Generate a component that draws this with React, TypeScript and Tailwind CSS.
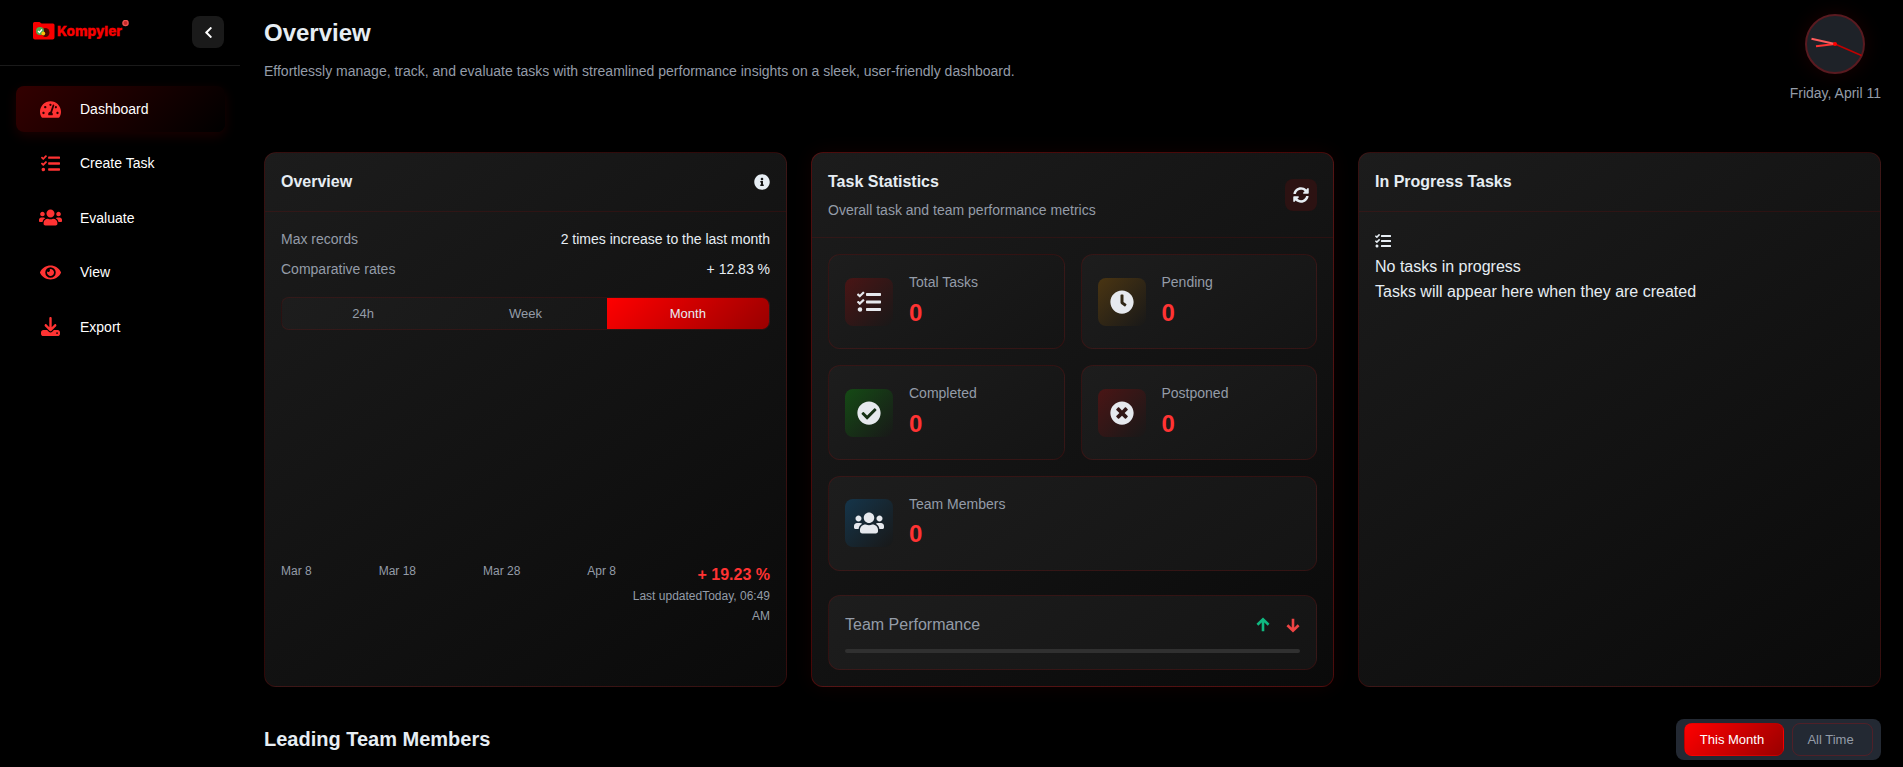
import { FaTachometerAlt, FaTasks, FaUsers, FaEye, FaClock, FaCheckCircle, FaTimesCircle, FaInfoCircle, FaSyncAlt, FaChevronLeft } from 'react-icons/fa';
import { FaDownload } from 'react-icons/fa6';
import type { ReactNode } from 'react';

const nav = [
  { label: 'Dashboard', icon: <FaTachometerAlt size={21} />, active: true },
  { label: 'Create Task', icon: <FaTasks size={19} /> },
  { label: 'Evaluate', icon: <FaUsers size={23} /> },
  { label: 'View', icon: <FaEye size={21} /> },
  { label: 'Export', icon: <FaDownload size={19} /> },
];

function Arrow({ down, className }: { down?: boolean; className: string }) {
  return (
    <svg width="14" height="16" viewBox="0 0 14 16" className={className}>
      <path d={down ? 'M7 1.800V13.500M1.400 8.200L7 13.700L12.600 8.200' : 'M7 14.200V2.500M1.400 7.800L7 2.300L12.600 7.800'} fill="none" stroke="currentColor" strokeWidth="2.600" />
    </svg>
  );
}

function Logo() {
  return (
    <svg width="98" height="24" viewBox="0 1 98 24" className="ml-8">
      <path d="M1 4.500q0-1.500 1.500-1.500h5l2 1.500h11.500q1.500 0 1.500 1.500v12.500q0 2-2 2H3q-2 0-2-2z" fill="#f80000" />
      <ellipse cx="13.500" cy="13.500" rx="4" ry="4.500" fill="#4a0800" />
      <circle cx="8" cy="12" r="4" fill="#4caf50" />
      <path d="M6 12l1.500 1.500 2.500-3" stroke="#fff" strokeWidth="1.200" fill="none" />
      <circle cx="11.300" cy="14.500" r="1.900" fill="#ffc107" />
      <text x="25" y="17" fontFamily="Inter, sans-serif" fontWeight="800" fontSize="13.500" fill="#f80000" stroke="#f80000" strokeWidth="0.300" textLength="65" lengthAdjust="spacingAndGlyphs">Kompyler</text>
      <circle cx="93.500" cy="4" r="2.600" fill="#c62828" stroke="#ef5350" strokeWidth="1.400" />
    </svg>
  );
}

function Stat({ label, icon, tint, wide }: { label: string; icon: ReactNode; tint: string; wide?: boolean }) {
  return (
    <div className={`flex items-center gap-4 rounded-xl border border-[#ff000020] bg-linear-145/srgb from-[#1d1d1d] to-[#141414] p-4 ${wide ? 'col-span-2' : ''}`}>
      <div className={`flex size-12 items-center justify-center rounded-lg bg-linear-135/srgb text-[#e6e9ee] ${tint}`}>{icon}</div>
      <div>
        <div className="text-sm leading-[22.4px] text-[#949ca8]">{label}</div>
        <div className="text-2xl leading-[38.4px] font-bold text-[#ff3333]">0</div>
      </div>
    </div>
  );
}

const card = 'flex w-[523px] flex-col rounded-xl border bg-linear-145/srgb from-[#1c1c1c] to-[#0a0a0a]';

export default function App() {
  return (
    <div className="flex h-[767px] w-[1903px] overflow-hidden bg-black font-['Liberation_Sans',Arial,sans-serif] text-base leading-[25.6px] text-[#e6edf3]">
      <aside className="w-60 shrink-0">
        <div className="flex h-[66px] items-center justify-between border-b border-[#1a1a1a] pr-4 pb-px">
          <Logo />
          <button className="flex size-8 items-center justify-center rounded-lg bg-[#1a1a1a] text-white"><FaChevronLeft size={13} /></button>
        </div>
        <nav className="flex flex-col gap-2 px-4 pt-5">
          {nav.map((n) => (
            <div key={n.label} className={`flex h-[46.4px] w-[209px] items-center rounded-lg pl-[23px] ${n.active ? 'bg-linear-135/srgb from-[#330000] to-black shadow-[0_4px_12px_rgba(255,0,0,0.1)]' : ''}`}>
              <span className="flex w-[23px] justify-center text-[#ff3333]">{n.icon}</span>
              <span className="ml-[18px] text-sm leading-[22.4px] text-white">{n.label}</span>
            </div>
          ))}
        </nav>
      </aside>

      <main className="w-[1663px] pr-[22px] pl-6">
        <header className="flex h-[152.400px] justify-between">
          <div className="pt-[14px]">
            <h1 className="text-2xl leading-[38.4px] font-bold">Overview</h1>
            <p className="mt-2 text-sm leading-[22.4px] text-[#949ca8]">Effortlessly manage, track, and evaluate tasks with streamlined performance insights on a sleek, user-friendly dashboard.</p>
          </div>
          <div className="flex flex-col items-end pt-[14px]">
            <div className="mr-4 size-[60px] rounded-full shadow-[0_0_20px_rgba(255,0,0,0.1)]">
              <svg width="60" height="60" viewBox="0 0 60 60">
                <circle cx="30" cy="30" r="29" fill="#1e2228" stroke="#5a1a20" strokeWidth="2" />
                <path d="M30 30L11 32.200" stroke="#ff3333" strokeWidth="2" />
                <path d="M30 30L6.500 24.700" stroke="#ff5c5c" strokeWidth="2" />
                <path d="M30 30L56.500 41.500" stroke="#c00000" strokeWidth="1.500" />
                <circle cx="30" cy="30" r="2" fill="#ff0000" />
              </svg>
            </div>
            <div className="mt-2 text-sm leading-[22.4px] text-[#949ca8]">Friday, April 11</div>
          </div>
        </header>

        <div className="flex h-[534.600px] gap-6">
          <section className={`${card} border-[#ff000026]`}>
            <div className="flex items-center justify-between border-b border-[#ff00001a] p-4">
              <h2 className="font-bold">Overview</h2>
              <FaInfoCircle size={16} />
            </div>
            <div className="p-4">
              <div className="flex justify-between text-sm leading-[22.4px]"><span className="text-[#949ca8]">Max records</span><span>2 times increase to the last month</span></div>
              <div className="mt-2 flex justify-between text-sm leading-[22.4px]"><span className="text-[#949ca8]">Comparative rates</span><span>+ 12.83 %</span></div>
              <div className="mt-4 grid grid-cols-3 overflow-hidden rounded-lg border border-[#ff00001a] bg-linear-135/srgb from-[#1d1d1d] to-[#141414] text-center text-[13px] leading-[15px] text-[#949ca8]">
                <span className="py-2">24h</span>
                <span className="py-2">Week</span>
                <span className="bg-linear-135/srgb from-[#ff0000] to-[#990000] py-2 text-[#e6edf3]">Month</span>
              </div>
              <div className="mt-4 h-[200px]" />
              <div className="mt-4 flex gap-4 text-xs leading-[19.2px] text-[#949ca8]">
                <div className="flex grow justify-between"><span>Mar 8</span><span>Mar 18</span><span>Mar 28</span><span>Apr 8</span></div>
                <div className="w-[138px] text-right">
                  <div className="text-base leading-[25.6px] font-bold text-[#ff3333]">+ 19.23 %</div>
                  <div>Last updatedToday, 06:49 AM</div>
                </div>
              </div>
            </div>
          </section>

          <section className={`${card} border-[#ff000040] shadow-[0_0_20px_rgba(255,0,0,0.06)]`}>
            <div className="flex items-center justify-between border-b border-[#ff00001a] p-4">
              <div>
                <h2 className="font-bold">Task Statistics</h2>
                <p className="mt-1 text-sm leading-[22.4px] text-[#949ca8]">Overall task and team performance metrics</p>
              </div>
              <button className="flex size-8 items-center justify-center rounded-lg bg-[#2c1212]"><FaSyncAlt size={16} /></button>
            </div>
            <div className="p-4">
              <div className="grid grid-cols-2 gap-4">
                <Stat label="Total Tasks" tint="from-[#4a1515] to-[#181818]" icon={<FaTasks size={24} />} />
                <Stat label="Pending" tint="from-[#4a3512] to-[#181818]" icon={<FaClock size={24} />} />
                <Stat label="Completed" tint="from-[#154a15] to-[#181818]" icon={<FaCheckCircle size={24} />} />
                <Stat label="Postponed" tint="from-[#4a1515] to-[#181818]" icon={<FaTimesCircle size={24} />} />
                <Stat wide label="Team Members" tint="from-[#15354a] to-[#181818]" icon={<FaUsers size={30} />} />
              </div>
              <div className="mt-6 rounded-xl border border-[#ff000020] bg-linear-145/srgb from-[#1d1d1d] to-[#141414] p-4">
                <div className="flex items-center justify-between text-[#949ca8]">
                  <span>Team Performance</span>
                  <span className="flex gap-4"><Arrow className="text-[#10b981]" /><Arrow down className="text-[#ef4444]" /></span>
                </div>
                <div className="mt-3 h-1 rounded-sm bg-[#303030]" />
              </div>
            </div>
          </section>

          <section className={`${card} border-[#ff000026]`}>
            <div className="border-b border-[#ff00001a] p-4"><h2 className="font-bold">In Progress Tasks</h2></div>
            <div className="p-4">
              <div className="flex h-[25.6px] items-center"><FaTasks size={16} /></div>
              <p>No tasks in progress</p>
              <p>Tasks will appear here when they are created</p>
            </div>
          </section>
        </div>

        <div className="mt-8 flex h-[41px] items-center justify-between">
          <h2 className="pt-px text-xl leading-[27px] font-bold">Leading Team Members</h2>
          <div className="flex h-[41px] gap-2 rounded-lg bg-[#232933] px-2 py-1 text-[13px] leading-[15px]">
            <button className="w-[100px] rounded-lg border border-[#ff000040] bg-linear-135/srgb from-[#ff0000] to-[#990000] pr-1 text-white">This Month</button>
            <button className="w-[81px] rounded-lg border border-[#ff000033] pr-1 text-[#949ca8]">All Time</button>
          </div>
        </div>
      </main>
    </div>
  );
}
